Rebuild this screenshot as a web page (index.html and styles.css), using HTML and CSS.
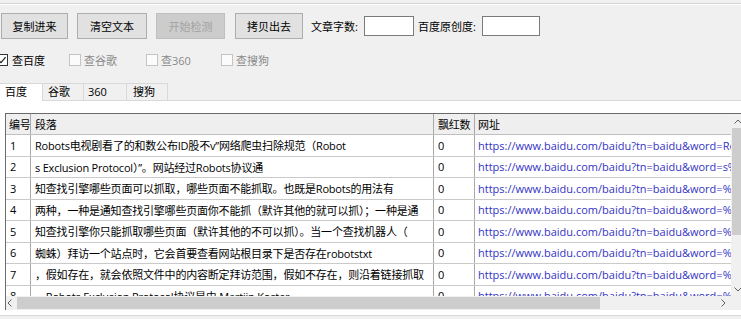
FILE: index.html
```html
<!DOCTYPE html>
<html lang="zh">
<head>
<meta charset="utf-8">
<title>原创度检测</title>
<link rel="stylesheet" href="styles.css">
</head>
<body>
<div class="topline"></div>
<div class="toolbar">
  <button class="btn b1">复制进来</button>
  <button class="btn b2">清空文本</button>
  <button class="btn b3" disabled>开始检测</button>
  <button class="btn b4">拷贝出去</button>
  <span class="lbl l1">文章字数:</span>
  <span class="input i1"></span>
  <span class="lbl l2">百度原创度:</span>
  <span class="input i2"></span>
</div>
<div class="checks">
  <label class="chk k1"><span class="box"><svg width="10" height="10" viewBox="0 0 10 10"><path d="M1.5 5.2 L4 7.6 L8.6 2.2" fill="none" stroke="#222" stroke-width="1.2"/></svg></span>查百度</label>
  <label class="chk off k2"><span class="box"></span>查谷歌</label>
  <label class="chk off k3"><span class="box"></span>查360</label>
  <label class="chk off k4"><span class="box"></span>查搜狗</label>
</div>
<div class="tabs">
  <div class="tab active t1">百度</div>
  <div class="tab t2">谷歌</div>
  <div class="tab t3">360</div>
  <div class="tab t4">搜狗</div>
</div>
<div class="panel">
  <div class="grid">
    <div class="grid-main">
      <div class="cells">
        <div class="row head"><div class="c c1 hc1">编号</div><div class="c c2">段落</div><div class="c c3">飘红数</div><div class="c c4">网址</div></div>
        <div class="row"><div class="c c1">1</div><div class="c c2">Robots电视剧看了的和数公布ID股不v”网络爬虫扫除规范（Robot</div><div class="c c3">0</div><div class="c c4 url">https://www.baidu.com/baidu?tn=baidu&amp;word=Robots%E7%94%B5</div></div>
        <div class="row"><div class="c c1">2</div><div class="c c2">s Exclusion Protocol）”。网站经过Robots协议通</div><div class="c c3">0</div><div class="c c4 url">https://www.baidu.com/baidu?tn=baidu&amp;word=s%20Exclusion</div></div>
        <div class="row"><div class="c c1">3</div><div class="c c2">知查找引擎哪些页面可以抓取，哪些页面不能抓取。也既是Robots的用法有</div><div class="c c3">0</div><div class="c c4 url">https://www.baidu.com/baidu?tn=baidu&amp;word=%E7%9F%A5</div></div>
        <div class="row"><div class="c c1">4</div><div class="c c2">两种，一种是通知查找引擎哪些页面你不能抓（默许其他的就可以抓）；一种是通</div><div class="c c3">0</div><div class="c c4 url">https://www.baidu.com/baidu?tn=baidu&amp;word=%E4%B8%A4</div></div>
        <div class="row"><div class="c c1">5</div><div class="c c2">知查找引擎你只能抓取哪些页面（默许其他的不可以抓）。当一个查找机器人（</div><div class="c c3">0</div><div class="c c4 url">https://www.baidu.com/baidu?tn=baidu&amp;word=%E7%9F%A5</div></div>
        <div class="row"><div class="c c1">6</div><div class="c c2">蜘蛛）拜访一个站点时，它会首要查看网站根目录下是否存在robotstxt</div><div class="c c3">0</div><div class="c c4 url">https://www.baidu.com/baidu?tn=baidu&amp;word=%E8%9C%98</div></div>
        <div class="row"><div class="c c1">7</div><div class="c c2">，假如存在，就会依照文件中的内容断定拜访范围，假如不存在，则沿着链接抓取</div><div class="c c3">0</div><div class="c c4 url">https://www.baidu.com/baidu?tn=baidu&amp;word=%EF%BC%8C</div></div>
        <div class="row"><div class="c c1">8</div><div class="c c2">，Robots Exclusion Protocol协议是由 Martijn Koster</div><div class="c c3">0</div><div class="c c4 url">https://www.baidu.com/baidu?tn=baidu&amp;word=%EF%BC%8C</div></div>
      </div>
      <div class="vscroll">
        <div class="vbtn"><svg width="8" height="5" viewBox="0 0 8 5"><path d="M0.5 4.5 L4 1 L7.5 4.5" fill="none" stroke="#606060" stroke-width="1"/></svg></div>
        <div class="vthumb"></div>
        <div class="vtrack"></div>
        <div class="vbtn"><svg width="8" height="5" viewBox="0 0 8 5"><path d="M0.5 0.5 L4 4 L7.5 0.5" fill="none" stroke="#606060" stroke-width="1"/></svg></div>
      </div>
    </div>
    <div class="hscroll">
      <div class="hbtn hl"><svg width="5" height="8" viewBox="0 0 5 8"><path d="M4.5 0.5 L1 4 L4.5 7.5" fill="none" stroke="#606060" stroke-width="1"/></svg></div>
      <div class="hthumb"></div>
      <div class="htrack"></div>
      <div class="hbtn hr"><svg width="5" height="8" viewBox="0 0 5 8"><path d="M0.5 0.5 L4 4 L0.5 7.5" fill="none" stroke="#606060" stroke-width="1"/></svg></div>
      <div class="corner"></div>
    </div>
  </div>
</div>
</body>
</html>
```
FILE: styles.css
```css
html, body {
  margin: 0;
  padding: 0;
}
body {
  width: 741px;
  height: 319px;
  overflow: hidden;
  background: #f0f0f0;
  color: #000;
  font-family: "Open Sans", "Noto Sans CJK SC", sans-serif;
  font-size: 11px;
}
.topline {
  margin-top: 3px;
  height: 1px;
  border-top: 1px solid #d5d5d5;
  background: #fff;
}
.toolbar {
  display: flex;
  align-items: center;
  height: 26px;
  margin-top: 8px;
  padding-left: 1px;
}
.btn {
  height: 26px;
  box-sizing: border-box;
  margin: 0;
  padding: 0;
  border: 1px solid #adadad;
  background: #e1e1e1;
  color: #000;
  font: inherit;
}
.b1 { width: 67px; }
.b2 { width: 70px; margin-left: 9px; }
.b3 {
  width: 69px;
  margin-left: 9px;
  background: #cccccc;
  border-color: #bfbfbf;
  color: #a3a3a3;
}
.b4 { width: 68px; margin-left: 10px; }
.lbl { white-space: nowrap; }
.l1 { margin-left: 8px; width: 53px; }
.l2 { margin-left: 4px; width: 64px; }
.input {
  height: 20px;
  box-sizing: border-box;
  border: 1px solid #7a7a7a;
  background: #fff;
}
.i1 { width: 50px; }
.i2 { width: 58px; }

.checks {
  display: flex;
  align-items: center;
  height: 14px;
  margin-top: 14px;
  margin-left: -4px;
}
.chk {
  display: flex;
  align-items: center;
  gap: 3px;
  white-space: nowrap;
}
.k1 { width: 73px; gap: 4px; }
.k2 { width: 77px; }
.k3 { width: 75px; }
.box {
  width: 12px;
  height: 12px;
  box-sizing: border-box;
  border: 1px solid #333;
  background: #fff;
  display: flex;
  align-items: center;
  justify-content: center;
}
.chk.off { color: #8a8a8a; }
.chk.off .box {
  border-color: #c4c4c4;
  background: #fbfbfb;
}

.tabs {
  display: flex;
  height: 17px;
  margin-top: 16px;
  border-bottom: 1px solid #d9d9d9;
}
.tab {
  box-sizing: border-box;
  height: 17px;
  border-top: 1px solid #d9d9d9;
  border-right: 1px solid #d9d9d9;
  line-height: 15px;
  padding-left: 5px;
  white-space: nowrap;
}
.t1 { width: 43px; }
.t2 { width: 41px; }
.t3 { width: 43px; padding-left: 4px; }
.t4 { width: 41px; padding-left: 6px; }
.tab.active {
  background: #fff;
  height: 18px;
  margin-bottom: -1px;
}

.panel {
  background: #fff;
  padding: 12px 0 5px 5px;
  border-bottom: 1px solid #d9d9d9;
  overflow: hidden;
}
.grid {
  width: 740px;
  height: 197px;
  box-sizing: border-box;
  border-left: 1px solid #6b6b6b;
  border-top: 1px solid #6b6b6b;
  display: flex;
  flex-direction: column;
}
.grid-main {
  display: flex;
  height: 182px;
}
.cells {
  width: 725px;
  flex: none;
  overflow: hidden;
}
.row {
  display: flex;
  height: 21.5px;
  box-sizing: border-box;
  border-bottom: 1px solid #cacaca;
}
.row.head {
  height: 21px;
  background: #efefef;
  border-bottom-color: #c0c0c0;
}
.c {
  flex: none;
  box-sizing: border-box;
  border-right: 1px solid #a9a9a9;
  padding: 0 4px;
  white-space: nowrap;
  overflow: hidden;
  display: flex;
  align-items: center;
  letter-spacing: -0.2px;
}
.c1 { width: 25px; }
.hc1 { padding-left: 3px; }
.c2 { width: 403px; }
.c3 { width: 41px; }
.c4 { width: 300px; border-right: none; padding-left: 3px; letter-spacing: 0; }
.url { color: #3434c4; }

.vscroll {
  width: 14px;
  flex: none;
  background: #f0f0f0;
  display: flex;
  flex-direction: column;
}
.vbtn {
  height: 14px;
  flex: none;
  display: flex;
  align-items: center;
  justify-content: center;
}
.vthumb {
  height: 107px;
  flex: none;
  margin: 0 1px;
  background: #cdcdcd;
}
.vtrack { flex: 1; }

.hscroll {
  display: flex;
  height: 14px;
  background: #f0f0f0;
}
.hbtn {
  flex: none;
  display: flex;
  align-items: center;
}
.hl { width: 11px; padding-left: 1px; box-sizing: border-box; }
.hr { width: 15px; justify-content: center; }
.hthumb {
  width: 583px;
  flex: none;
  margin: 1px 0;
  background: #cdcdcd;
}
.htrack { flex: 1; }
.corner { width: 14px; flex: none; background: #f0f0f0; }
```
